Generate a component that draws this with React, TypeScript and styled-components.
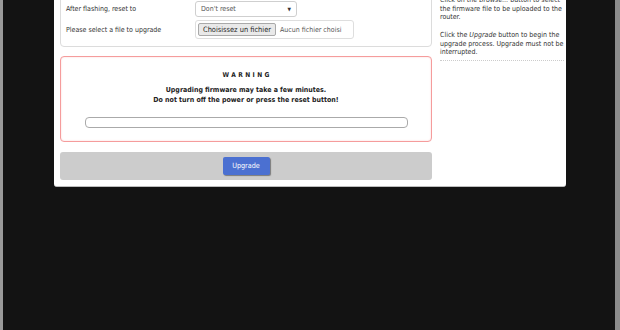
import React from "react";
import styled, { createGlobalStyle } from "styled-components";

const GlobalStyle = createGlobalStyle`
  html, body {
    margin: 0;
    padding: 0;
    background: #131313;
    overflow: hidden;
  }
  body {
    font-family: "DejaVu Sans Condensed", "DejaVu Sans", "Liberation Sans", sans-serif;
  }
`;

const App: React.FC = () => {
  return (
    <>
      <GlobalStyle />
      <Screen>
        <Panel>
          <MainColumn>
            <FormBox>
              <FormRow>
                <FieldLabel>After flashing, reset to</FieldLabel>
                <SelectBox>
                  <span>Don't reset</span>
                  <Caret>▼</Caret>
                </SelectBox>
              </FormRow>
              <FormRow>
                <FieldLabel>Please select a file to upgrade</FieldLabel>
                <FileBox>
                  <FileButton>Choisissez un fichier</FileButton>
                  <FileName>Aucun fichier choisi</FileName>
                </FileBox>
              </FormRow>
            </FormBox>

            {/* avertissement */}
            <WarningBox>
              <WarningTitle>WARNING</WarningTitle>
              <WarningText>
                Upgrading firmware may take a few minutes.
                <br />
                Do not turn off the power or press the reset button!
              </WarningText>
              <ProgressTrack>
                <ProgressFill style={{ width: "0%" }} />
              </ProgressTrack>
            </WarningBox>

            <ActionBar>
              <UpgradeButton>Upgrade</UpgradeButton>
            </ActionBar>
          </MainColumn>

          <HelpColumn>
            <HelpText>
              Click on the <em>Browse...</em> button to select the firmware file to be
              uploaded to the router.
            </HelpText>
            <HelpText>
              Click the <em>Upgrade</em> button to begin the upgrade process. Upgrade must
              not be interrupted.
            </HelpText>
            <HelpDivider />
          </HelpColumn>
        </Panel>
      </Screen>
    </>
  );
};

export default App;

// Styled Components
const Screen = styled.div`
  width: 620px;
  height: 330px;
  box-sizing: border-box;
  background: #131313;
  border-left: 3px solid #9a9a9a;
  border-right: 5px solid #8c8c8c;
  padding-left: 51px;
  overflow: hidden;
`;

const Panel = styled.div`
  display: flex;
  gap: 8px;
  width: 512px;
  box-sizing: border-box;
  margin-top: -20px;
  padding: 0 0 6px 6px;
  background: #ffffff;
  border-bottom: 1px solid #bdbdbd;
  border-radius: 0 0 3px 3px;
`;

const MainColumn = styled.div`
  display: flex;
  flex-direction: column;
  width: 372px;
`;

const FormBox = styled.div`
  display: flex;
  flex-direction: column;
  gap: 3px;
  padding: 20px 0 7px 5px;
  border: 1px solid #dcdcdc;
  border-radius: 4px;
`;

const FormRow = styled.div`
  display: flex;
  align-items: center;
`;

const FieldLabel = styled.div`
  width: 129px;
  font-size: 7px;
  color: #333333;
`;

const SelectBox = styled.div`
  display: flex;
  align-items: center;
  justify-content: space-between;
  box-sizing: border-box;
  width: 102px;
  height: 16px;
  padding: 0 5px;
  border: 1px solid #cfcfcf;
  border-radius: 3px;
  font-size: 7px;
  color: #555555;
`;

const Caret = styled.span`
  font-size: 5px;
  color: #333333;
`;

const FileBox = styled.div`
  display: flex;
  align-items: center;
  gap: 4px;
  box-sizing: border-box;
  width: 159px;
  height: 19px;
  padding: 0 2px;
  border: 1px solid #dedede;
  border-radius: 3px;
  overflow: hidden;
  white-space: nowrap;
`;

const FileButton = styled.div`
  box-sizing: border-box;
  height: 13px;
  padding: 0 4px;
  line-height: 11px;
  background: #e9e9e9;
  border: 1px solid #a9a9a9;
  border-radius: 2px;
  font-size: 7.4px;
  color: #222222;
`;

const FileName = styled.span`
  font-size: 7px;
  color: #555555;
`;

const WarningBox = styled.div`
  display: flex;
  flex-direction: column;
  align-items: center;
  box-sizing: border-box;
  height: 86px;
  margin-top: 9px;
  padding-top: 14px;
  border: 1px solid #f59c9c;
  border-radius: 4px;
  box-shadow: inset 0 0 2px #fbd0d0;
`;

const WarningTitle = styled.div`
  font-size: 6.6px;
  font-weight: bold;
  letter-spacing: 2.4px;
  margin-right: -2.4px;
  color: #222222;
`;

const WarningText = styled.div`
  margin-top: 6px;
  font-size: 7px;
  font-weight: bold;
  line-height: 10px;
  text-align: center;
  color: #222222;
`;

const ProgressTrack = styled.div`
  box-sizing: border-box;
  width: 323px;
  height: 11px;
  margin-top: 12px;
  border: 1px solid #aaaaaa;
  border-radius: 4px;
  background: #ffffff;
  overflow: hidden;
`;

const ProgressFill = styled.div`
  height: 100%;
  background: #4a6fd0;
`;

const ActionBar = styled.div`
  display: flex;
  justify-content: center;
  align-items: center;
  height: 28px;
  margin-top: 10px;
  background: #cccccc;
  border-radius: 3px;
`;

const UpgradeButton = styled.div`
  box-sizing: border-box;
  width: 47px;
  height: 18px;
  line-height: 18px;
  text-align: center;
  background: #4b70d1;
  border-radius: 2px;
  box-shadow: 1px 1px 1px #7a7a7a;
  font-size: 7.2px;
  color: #ffffff;
`;

const HelpColumn = styled.div`
  display: flex;
  flex-direction: column;
  width: 124px;
  padding-top: 16px;
`;

const HelpText = styled.p`
  margin: 0;
  font-size: 7px;
  line-height: 8.7px;
  color: #333333;

  & + & {
    margin-top: 8.7px;
  }

  em {
    font-style: italic;
  }
`;

const HelpDivider = styled.div`
  margin-top: 3px;
  border-top: 1px dotted #cccccc;
`;
